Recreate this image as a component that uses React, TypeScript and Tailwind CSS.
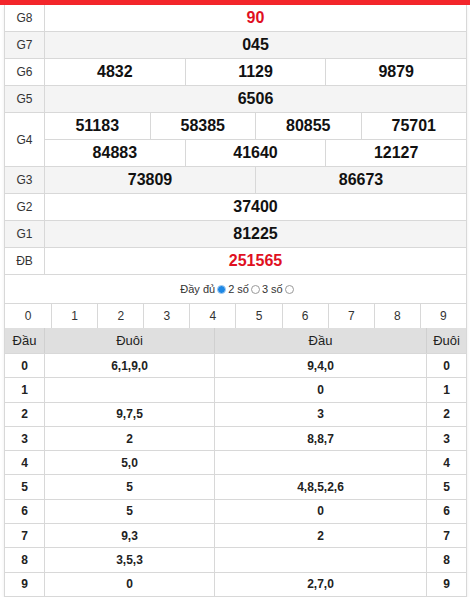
import React from "react";

const font = { fontFamily: '"Liberation Sans", Arial, sans-serif' };

function Row({ label, gray, children, h = "h-[27px]" }: { label: string; gray?: boolean; children: React.ReactNode; h?: string }) {
  return (
    <div className={`flex ${h} border-b border-[#d8d8d8] ${gray ? "bg-[#f4f4f4]" : "bg-white"}`}>
      <div className="w-[40px] shrink-0 border-r border-[#d8d8d8] flex items-center justify-center text-[12px] text-[#333]">{label}</div>
      <div className="flex-1 min-w-0">{children}</div>
    </div>
  );
}

function Cells({ vals, red }: { vals: string[]; red?: boolean }) {
  return (
    <div className="flex h-full">
      {vals.map((v, i) => (
        <div
          key={i}
          className={`flex-1 basis-0 flex items-center justify-center text-[16px] font-bold ${red ? "text-[#e0101f]" : "text-[#111]"} ${i > 0 ? "border-l border-[#d8d8d8]" : ""}`}
        >
          {v}
        </div>
      ))}
    </div>
  );
}

const left = ["6,1,9,0", "", "9,7,5", "2", "5,0", "5", "5", "9,3", "3,5,3", "0"];
const right = ["9,4,0", "0", "3", "8,8,7", "", "4,8,5,2,6", "0", "2", "", "2,7,0"];

function Radio({ checked }: { checked?: boolean }) {
  return checked ? (
    <span className="inline-block w-[9px] h-[9px] rounded-full bg-[#1e88e5] border border-[#a8cdf0] mx-[2px]" />
  ) : (
    <span className="inline-block w-[9px] h-[9px] rounded-full bg-white border border-[#9a9a9a] mx-[2px]" />
  );
}

export default function App() {
  return (
    <div className="w-[471px] bg-white" style={font}>
      <div className="h-[5px] w-[470px] bg-[#f3262b]" />
      <div className="ml-[4px] w-[463px] border-x border-[#d8d8d8] shadow-[0_2px_3px_rgba(0,0,0,0.08)]">
        <Row label="G8"><Cells vals={["90"]} red /></Row>
        <Row label="G7" gray><Cells vals={["045"]} /></Row>
        <Row label="G6"><Cells vals={["4832", "1129", "9879"]} /></Row>
        <Row label="G5" gray><Cells vals={["6506"]} /></Row>
        <div className="flex bg-white">
          <div className="w-[40px] shrink-0 border-r border-b border-[#d8d8d8] flex items-center justify-center text-[12px] text-[#333]">G4</div>
          <div className="flex-1 min-w-0">
            <div className="h-[27px] border-b border-[#d8d8d8]"><Cells vals={["51183", "58385", "80855", "75701"]} /></div>
            <div className="h-[27px] border-b border-[#d8d8d8]"><Cells vals={["84883", "41640", "12127"]} /></div>
          </div>
        </div>
        <Row label="G3" gray><Cells vals={["73809", "86673"]} /></Row>
        <Row label="G2"><Cells vals={["37400"]} /></Row>
        <Row label="G1" gray><Cells vals={["81225"]} /></Row>
        <Row label="ĐB"><Cells vals={["251565"]} red /></Row>

        <div className="h-[28px] flex items-center justify-center text-[11px] text-[#333] pl-[5px]">
          <span>Đầy đủ</span>
          <Radio checked />
          <span>2 số</span>
          <Radio />
          <span>3 số</span>
          <Radio />
        </div>

        <div className="grid grid-cols-10 h-[25px] border-t border-[#d8d8d8]">
          {Array.from({ length: 10 }, (_, i) => (
            <div key={i} className={`flex items-center justify-center text-[12px] text-[#333] ${i > 0 ? "border-l border-[#d8d8d8]" : ""}`}>{i}</div>
          ))}
        </div>

        <div className="grid grid-cols-[40px_170px_212px_1fr] h-[26px] bg-[#dfdfdf] border-b border-[#d8d8d8] text-[13px] text-[#222]">
          <div className="flex items-center justify-center border-r border-[#d0d0d0]">Đầu</div>
          <div className="flex items-center justify-center border-r border-[#d0d0d0]">Đuôi</div>
          <div className="flex items-center justify-center border-r border-[#d0d0d0]">Đầu</div>
          <div className="flex items-center justify-center">Đuôi</div>
        </div>
        {left.map((l, i) => (
          <div key={i} className="grid grid-cols-[40px_170px_212px_1fr] h-[24.3px] border-b border-[#d8d8d8] text-[12px] font-bold text-[#222]">
            <div className="flex items-center justify-center border-r border-[#d8d8d8]">{i}</div>
            <div className="flex items-center justify-center border-r border-[#d8d8d8]">{l}</div>
            <div className="flex items-center justify-center border-r border-[#d8d8d8]">{right[i]}</div>
            <div className="flex items-center justify-center">{i}</div>
          </div>
        ))}
      </div>
    </div>
  );
}
